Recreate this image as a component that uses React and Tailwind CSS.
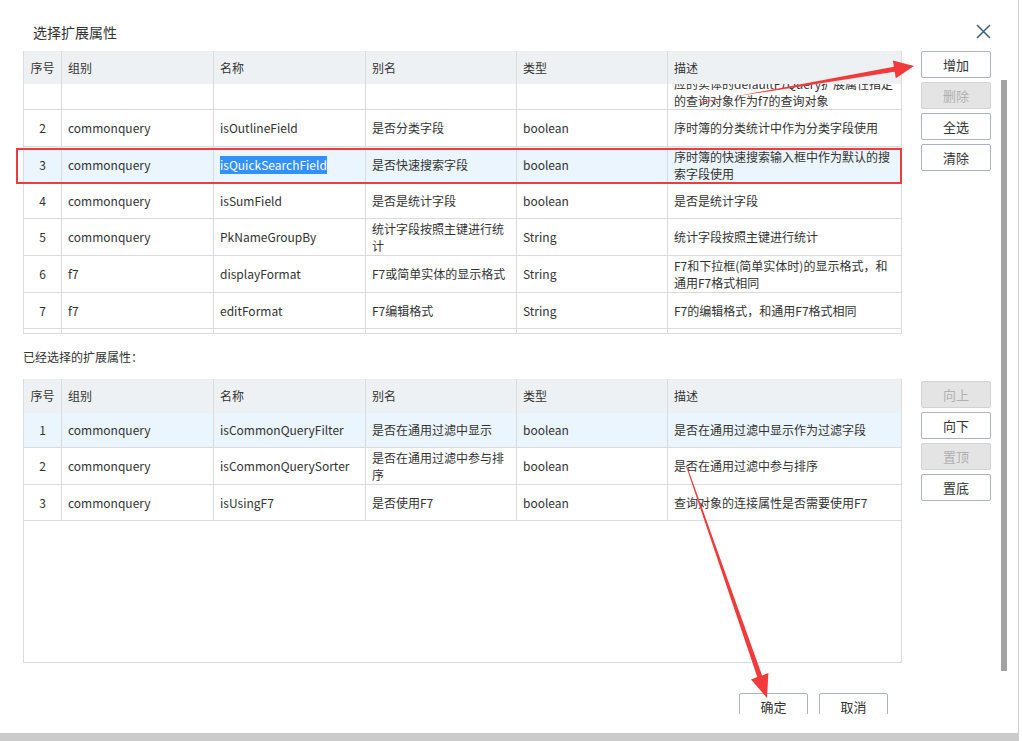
import React from 'react';

const cols = ['w-[38px]', 'w-[152px]', 'w-[152px]', 'w-[151px]', 'w-[151px]', 'w-[233px]'];
const headers = ['序号', '组别', '名称', '别名', '类型', '描述'];

const topRows = [
  { h: 'h-[53px]', tail: true, cells: ['', '', '', '', '', ['使用F7时，以F7对应的实体的default', '应的实体的defaultF7Query扩展属性指定', '的查询对象作为f7的查询对象']] },
  { h: 'h-[37px]', cells: ['2', 'commonquery', 'isOutlineField', '是否分类字段', 'boolean', '序时簿的分类统计中作为分类字段使用'] },
  { h: 'h-[37px]', sel: true, mark: true, cells: ['3', 'commonquery', 'isQuickSearchField', '是否快速搜索字段', 'boolean', ['序时簿的快速搜索输入框中作为默认的搜', '索字段使用']] },
  { h: 'h-[35px]', cells: ['4', 'commonquery', 'isSumField', '是否是统计字段', 'boolean', '是否是统计字段'] },
  { h: 'h-[37px]', cells: ['5', 'commonquery', 'PkNameGroupBy', ['统计字段按照主键进行统', '计'], 'String', '统计字段按照主键进行统计'] },
  { h: 'h-[37px]', cells: ['6', 'f7', 'displayFormat', 'F7或简单实体的显示格式', 'String', ['F7和下拉框(简单实体时)的显示格式，和', '通用F7格式相同']] },
  { h: 'h-[36px]', cells: ['7', 'f7', 'editFormat', 'F7编辑格式', 'String', 'F7的编辑格式，和通用F7格式相同'] },
  { h: 'h-[37px]', cells: ['', '', '', '', '', ''] },
];

const bottomRows = [
  { h: 'h-[35px]', sel: true, cells: ['1', 'commonquery', 'isCommonQueryFilter', '是否在通用过滤中显示', 'boolean', '是否在通用过滤中显示作为过滤字段'] },
  { h: 'h-[37px]', cells: ['2', 'commonquery', 'isCommonQuerySorter', ['是否在通用过滤中参与排', '序'], 'boolean', '是否在通用过滤中参与排序'] },
  { h: 'h-[36px]', cells: ['3', 'commonquery', 'isUsingF7', '是否使用F7', 'boolean', '查询对象的连接属性是否需要使用F7'] },
];

const CellText = ({ value, mark }) => {
  if (Array.isArray(value)) {
    return (
      <div className="leading-[17px]">
        {value.map((l, i) => (
          <div key={i} className="whitespace-nowrap">{l}</div>
        ))}
      </div>
    );
  }
  if (mark) return <span className="bg-[#3390ff] text-white">{value}</span>;
  return <span className="whitespace-nowrap">{value}</span>;
};

const Table = ({ rows, headH, height, shift }) => (
  <div className={`w-[879px] ${height} border-x border-b border-[#dcdcdc] overflow-hidden flex flex-col`}>
    <div className={`flex ${headH} bg-[#eef1f4] shrink-0`}>
      {headers.map((t, i) => (
        <div
          key={t}
          className={`${cols[i]} flex items-center ${i === 0 ? 'justify-center' : 'pl-[6px]'} ${i < 5 ? 'border-r border-[#d8dce1]' : ''}`}
        >
          {t}
        </div>
      ))}
    </div>
    <div className="flex-1 overflow-hidden">
      <div className={shift}>
        {rows.map((r, ri) => (
          <div key={ri} className={`flex ${r.h} border-b border-[#dcdcdc] ${r.sel ? 'bg-[#eaf5fd]' : ''}`}>
            {r.cells.map((c, i) => (
              <div
                key={i}
                className={`${cols[i]} flex ${r.tail ? 'items-end' : 'items-center'} ${i === 0 ? 'justify-center' : 'pl-[6px]'} ${i < 5 ? 'border-r border-[#dcdcdc]' : ''}`}
              >
                <CellText value={c} mark={r.mark && i === 2} />
              </div>
            ))}
          </div>
        ))}
      </div>
    </div>
  </div>
);

const SideButton = ({ children, disabled }) => (
  <button
    className={`w-[70px] h-[27px] rounded-[2px] border text-[13px] ${
      disabled ? 'bg-[#e4e4e4] border-[#d3d3d3] text-[#b0b0b0]' : 'bg-white border-[#aab4c6] text-[#333]'
    }`}
  >
    {children}
  </button>
);

export default function App() {
  return (
    <div className="relative w-[1022px] h-[741px] overflow-hidden bg-white text-[12px] text-[#333] font-['Noto_Sans_CJK_SC',sans-serif]">
      <div className="flex flex-col h-full">
        {/* title bar */}
        <div className="h-[51px] shrink-0 flex items-start justify-between pl-[33px] pr-[31px]">
          <div className="pt-[22px] text-[14px] text-[#333]">选择扩展属性</div>
          <svg className="mt-[24px]" width="15" height="15" viewBox="0 0 15 15">
            <path d="M1 1 L14 14 M14 1 L1 14" stroke="#3d5f84" strokeWidth="1.5" fill="none" />
          </svg>
        </div>

        {/* content */}
        <div className="flex pl-[23px]">
          <div className="flex flex-col w-[879px]">
            <Table rows={topRows} headH="h-[33px]" height="h-[283px]" shift="-mt-[27px]" />
            <div className="h-[45px] flex items-center">已经选择的扩展属性：</div>
            <Table rows={bottomRows} headH="h-[34px]" height="h-[284px]" shift="" />
          </div>
          <div className="flex flex-col ml-[19px]">
            <div className="flex flex-col gap-[4px]">
              <SideButton>增加</SideButton>
              <SideButton disabled>删除</SideButton>
              <SideButton>全选</SideButton>
              <SideButton>清除</SideButton>
            </div>
            <div className="flex flex-col gap-[4px] mt-[210px]">
              <SideButton disabled>向上</SideButton>
              <SideButton>向下</SideButton>
              <SideButton disabled>置顶</SideButton>
              <SideButton>置底</SideButton>
            </div>
          </div>
        </div>

        {/* footer */}
        <div className="mt-[30px] h-[21px] overflow-hidden flex justify-end gap-[11px] pr-[134px]">
          <button className="w-[69px] h-[27px] shrink-0 rounded-[2px] border border-[#aab4c6] bg-white text-[13px]">确定</button>
          <button className="w-[69px] h-[27px] shrink-0 rounded-[2px] border border-[#aab4c6] bg-white text-[13px]">取消</button>
        </div>

        <div className="mt-auto h-[8px] w-[1019px] bg-[#cbcbcb]" />
      </div>

      {/* scrollbar & right edge */}
      <div className="absolute left-[1001px] top-[80px] w-[6px] h-[591px] bg-[#a3a3a3]" />
      <div className="absolute left-[1018px] top-0 w-[1px] h-[741px] bg-[#cfcfcf]" />

      {/* red annotation box */}
      <div className="absolute left-[16px] top-[148px] w-[886px] h-[36px] border-2 border-[#ee3b3f]" />

      {/* red arrows */}
      <svg className="absolute left-0 top-0 pointer-events-none" width="1022" height="741">
        <polygon
          points="700,102 894.7,71.8 895.8,78.2 914,66 892.8,60.4 893.9,66.8 700,103"
          fill="#f23a3a"
        />
        <polygon
          points="686,466 757.3,677 751,679.5 767,698 768.4,673 762.1,675.4 687,466"
          fill="#f23a3a"
        />
      </svg>
    </div>
  );
}
